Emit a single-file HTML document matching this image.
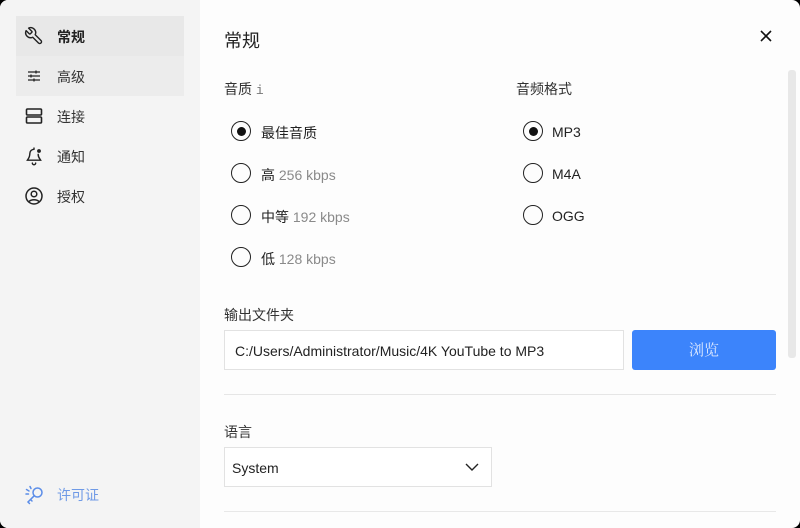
<!DOCTYPE html>
<html><head><meta charset="utf-8"><style>
*{margin:0;padding:0;box-sizing:border-box}
html,body{width:800px;height:528px;background:#000;overflow:hidden}
body{font-family:"Liberation Sans","Noto Sans CJK SC",sans-serif;color:#222}
#app{position:absolute;left:0;top:0;width:800px;height:528px;border-radius:8px;background:#fdfdfd;overflow:hidden}
#side{position:absolute;left:0;top:0;width:200px;height:528px;background:#f4f4f4}
.ni{position:absolute;left:16px;width:168px;height:40px;font-size:14px;color:#333}
.ni svg{position:absolute;left:8px;top:10px}
.ni span{position:absolute;left:41px;top:11px}
.a{position:absolute;font-size:14px}
.r{position:absolute;width:20px;height:20px;border:1.6px solid #222;border-radius:50%;display:flex;align-items:center;justify-content:center}
.r.on::after{content:"";width:9px;height:9px;border-radius:50%;background:#111}
.g{color:#8a8a8a}
</style></head><body><div id="app">
<div id="side">
 <div class="ni" style="top:16px;background:#e8e8e8"><svg width="20" height="20" viewBox="0 0 24 24" fill="none" stroke="#222" stroke-width="1.7" stroke-linejoin="round"><g transform="translate(24,0) scale(-1,1)"><path d="M14.7 6.3a1 1 0 0 0 0 1.4l1.6 1.6a1 1 0 0 0 1.4 0l3.77-3.77a6 6 0 0 1-7.94 7.94l-6.91 6.91a2.12 2.12 0 0 1-3-3l6.91-6.91a6 6 0 0 1 7.94-7.94l-3.76 3.76z"/></g></svg><span style="font-weight:bold;color:#222">常规</span></div>
 <div class="ni" style="top:56px;background:#ececec"><svg width="20" height="20" viewBox="0 0 20 20" stroke="#222" stroke-width="1.3"><path d="M4 6h12M4 10h12M4 14h12M12 4.5v3M7 8.5v3M10 12.5v3"/></svg><span>高级</span></div>
 <div class="ni" style="top:96px"><svg width="20" height="20" viewBox="0 0 20 20" fill="none" stroke="#222" stroke-width="1.6"><rect x="2.5" y="3" width="15" height="6" rx="1"/><rect x="2.5" y="11" width="15" height="6" rx="1"/></svg><span>连接</span></div>
 <div class="ni" style="top:136px"><svg width="20" height="20" viewBox="0 0 24 24" fill="none" stroke="#222" stroke-width="1.7" stroke-linecap="round"><path d="M12 2.5v1.5M12 4a5 5 0 0 0-5 5c0 5-2.5 7-3 8h16c-.5-1-3-3-3-7M10 20.5a2 2 0 0 0 4 0"/><circle cx="18" cy="6" r="2.3" fill="#222" stroke="none"/></svg><span>通知</span></div>
 <div class="ni" style="top:176px"><svg width="20" height="20" viewBox="0 0 20 20" fill="none" stroke="#222" stroke-width="1.5"><circle cx="10" cy="10" r="8"/><circle cx="10" cy="8" r="2.8"/><path d="M5 15.5a6 4 0 0 1 10 0"/></svg><span>授权</span></div>
 <div class="ni" style="top:474px;color:#6f9ae6"><svg width="22" height="22" viewBox="0 0 22 22" fill="none" stroke="#5b8de8" stroke-width="1.5" stroke-linecap="round"><circle cx="13.5" cy="8.5" r="4.5"/><path d="M10.3 11.7L4 18l1.5 1.5M6.5 15.5l1.5 1.5M2.5 5.5l2.5 1.5M2 10h2.5M6 2.5l1 2"/></svg><span style="color:#6f9ae6">许可证</span></div>
</div>
<div class="a" style="left:224px;top:27px;font-size:18px;color:#222">常规</div>
<svg style="position:absolute;left:759px;top:29px" width="14" height="14" viewBox="0 0 14 14" stroke="#111" stroke-width="1.6"><path d="M2 2l10 10M12 2L2 12"/></svg>
<div style="position:absolute;left:788px;top:70px;width:8px;height:288px;background:#e8e8e8;border-radius:3px"></div>
<div class="a" style="left:224px;top:79px;color:#333">音质 <span style="font-family:'Liberation Mono';color:#777;font-size:13px">i</span></div>
<div class="a" style="left:516px;top:79px;color:#333">音频格式</div>
<div class="r on" style="left:231px;top:121px"></div><div class="a" style="left:261px;top:123px">最佳音质</div>
<div class="r" style="left:231px;top:163px"></div><div class="a" style="left:261px;top:165px">高 <span class="g">256 kbps</span></div>
<div class="r" style="left:231px;top:205px"></div><div class="a" style="left:261px;top:207px">中等 <span class="g">192 kbps</span></div>
<div class="r" style="left:231px;top:247px"></div><div class="a" style="left:261px;top:249px">低 <span class="g">128 kbps</span></div>
<div class="r on" style="left:523px;top:121px"></div><div class="a" style="left:552px;top:124px">MP3</div>
<div class="r" style="left:523px;top:163px"></div><div class="a" style="left:552px;top:166px">M4A</div>
<div class="r" style="left:523px;top:205px"></div><div class="a" style="left:552px;top:208px">OGG</div>
<div class="a" style="left:224px;top:305px;color:#333">输出文件夹</div>
<div style="position:absolute;left:224px;top:330px;width:400px;height:40px;border:1px solid #e2e2e2;background:#fff"></div>
<div class="a" style="left:235px;top:343px;color:#222">C:/Users/Administrator/Music/4K YouTube to MP3</div>
<div style="position:absolute;left:632px;top:330px;width:144px;height:40px;background:#3c84fb;border-radius:3px;color:#dce8ff;font-size:15px;text-align:center;line-height:40px;font-family:'Noto Serif CJK SC',serif">浏览</div>
<div style="position:absolute;left:224px;top:394px;width:552px;height:1px;background:#e6e6e6"></div>
<div class="a" style="left:224px;top:422px;color:#333">语言</div>
<div style="position:absolute;left:224px;top:447px;width:268px;height:40px;border:1px solid #e2e2e2;background:#fff"></div>
<div class="a" style="left:232px;top:460px">System</div>
<svg style="position:absolute;left:465px;top:462px" width="14" height="10" viewBox="0 0 14 10" fill="none" stroke="#222" stroke-width="1.4"><path d="M1 2l6 6 6-6"/></svg>
<div style="position:absolute;left:224px;top:511px;width:552px;height:1px;background:#e8e8e8"></div>
</div></body></html>
